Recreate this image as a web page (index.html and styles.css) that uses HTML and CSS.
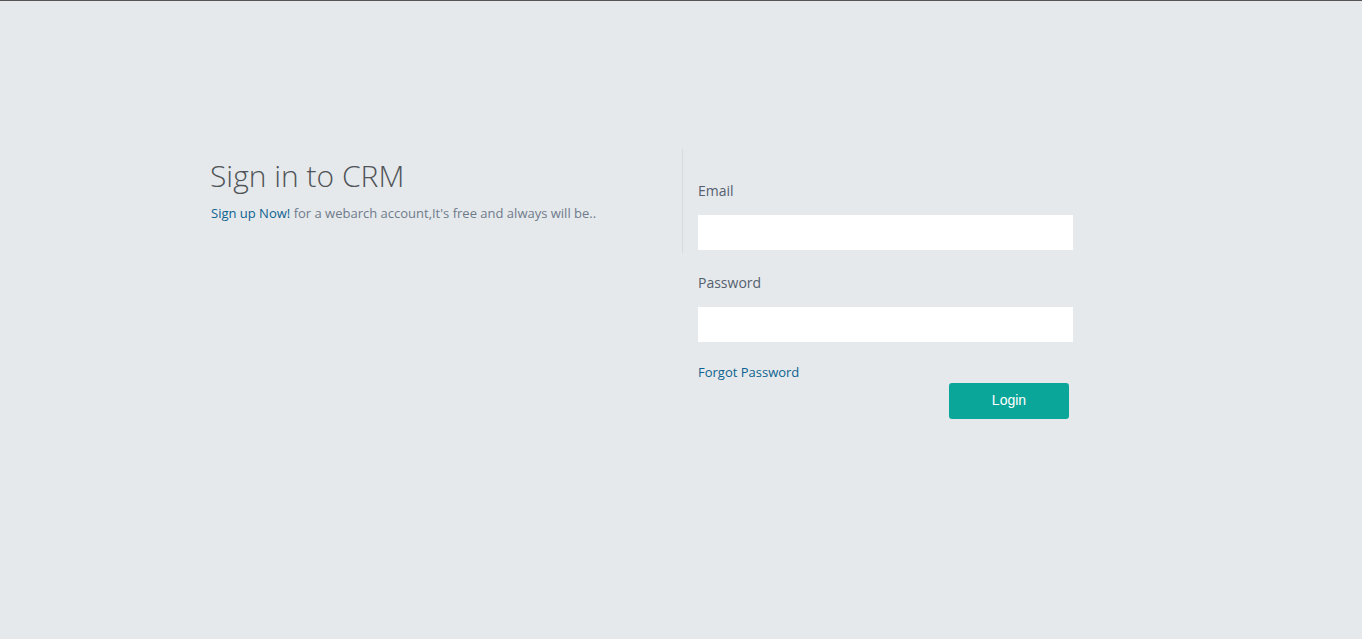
FILE: index.html
```html
<!DOCTYPE html>
<html>
<head>
<meta charset="utf-8">
<link rel="stylesheet" href="styles.css">
</head>
<body>
<div class="page">
  <div class="login">
    <div class="intro">
      <h2 class="title">Sign in to CRM</h2>
      <p class="sub"><a href="#" class="link">Sign up Now!</a> for a webarch account,It's free and always will be..</p>
    </div>
    <div class="divider"></div>
    <form class="form">
      <label class="label">Email</label>
      <input class="input" type="text">
      <label class="label label-second">Password</label>
      <input class="input" type="password">
      <a href="#" class="link forgot">Forgot Password</a>
      <div class="actions">
        <button type="button" class="btn">Login</button>
      </div>
    </form>
  </div>
</div>
</body>
</html>
```

FILE: styles.css
```css
html, body {
  margin: 0;
  padding: 0;
  height: 100%;
}
body {
  background: #e5e9ec;
  border-top: 1px solid #555;
  box-sizing: border-box;
  font-family: "Open Sans", "Liberation Sans", sans-serif;
  color: #6f7b8a;
}
.page {
  padding-top: 148px;
  padding-left: 210px;
}
.login {
  display: flex;
  align-items: flex-start;
}
.intro {
  width: 472px;
}
.title {
  margin: 7px 0 0;
  font-weight: 300;
  font-size: 30px;
  line-height: 40px;
  color: #505458;
}
.sub {
  margin: 8px 0 0 1px;
  font-size: 13px;
  line-height: 18px;
  color: #6f7b8a;
}
.link {
  color: #0d638f;
  text-decoration: none;
}
.divider {
  width: 1px;
  height: 104px;
  background: #d5dadd;
}
.form {
  display: flex;
  flex-direction: column;
  padding-left: 15px;
  padding-top: 32px;
  width: 375px;
}
.label {
  font-size: 14px;
  line-height: 20px;
  color: #55606e;
}
.label-second {
  margin-top: 23px;
}
.input {
  margin-top: 14px;
  height: 35px;
  border: none;
  background: #fff;
  padding: 0;
  outline: none;
}
.forgot {
  margin-top: 21px;
  font-size: 13px;
  line-height: 18px;
  align-self: flex-start;
}
.actions {
  display: flex;
  justify-content: flex-end;
  padding-right: 4px;
  margin-top: 2px;
}
.btn {
  width: 120px;
  height: 36px;
  border: none;
  border-radius: 3px;
  background: #0aa699;
  color: #fff;
  font-family: "Liberation Sans", Arial, sans-serif;
  font-size: 14px;
  padding: 0 0 2px;
}
```
